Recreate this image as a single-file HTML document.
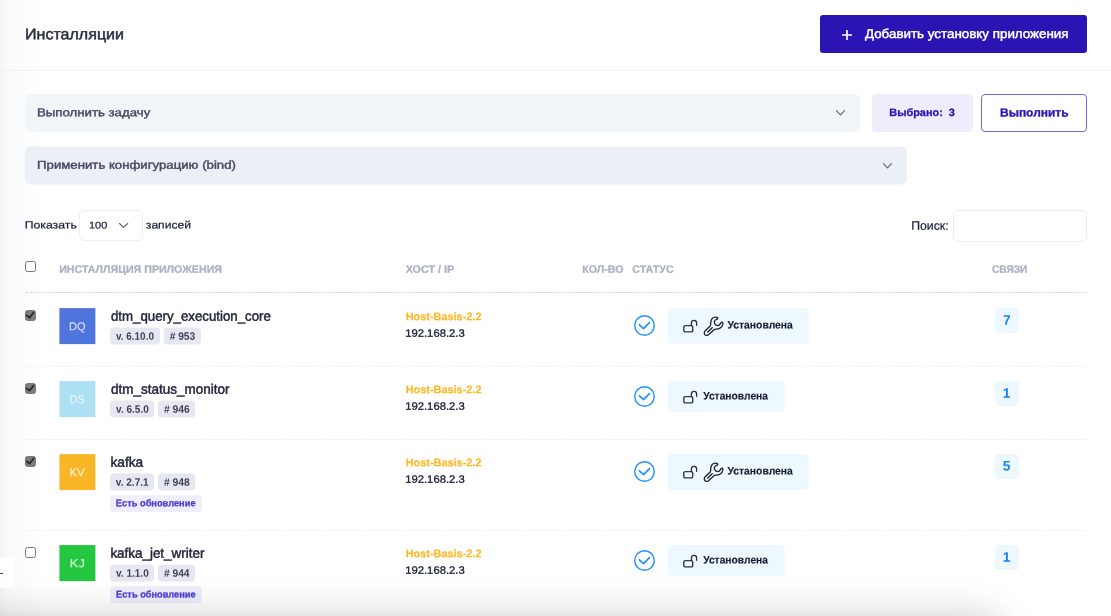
<!DOCTYPE html>
<html lang="ru">
<head>
<meta charset="utf-8">
<title>Инсталляции</title>
<style>
*{box-sizing:border-box;margin:0;padding:0}
html,body{width:1111px;height:616px;overflow:hidden;background:#fff}
body{font-family:"Liberation Sans",sans-serif;color:#3f4254;position:relative;font-size:13px}
#page{position:absolute;left:0;top:0;width:1111px;height:616px;overflow:hidden;will-change:transform}
.abs{position:absolute;white-space:nowrap}
.t{position:absolute;white-space:nowrap;line-height:1;transform-origin:0 50%;transform:translate(var(--dx,0px),calc(-50% + var(--dy,0px))) scaleX(var(--sx,1)) rotate(.03deg)}
.c{transform-origin:50% 50%;transform:translate(calc(-50% + var(--dx,0px)),calc(-50% + var(--dy,0px))) scaleX(var(--sx,1)) rotate(.03deg)}
.b{font-weight:bold}
/* edge shadows */
#lshadow{left:0;top:0;width:40px;height:616px;background:linear-gradient(90deg,#f0f2f4 0,#f4f5f7 1.5px,#f7f8fa 4px,#f9fafb 10px,#fbfcfd 25px,#fff 40px)}
#bshadow{left:-100px;top:618px;width:1097px;height:100px;box-shadow:0 0 40px rgba(0,0,0,.22)}
#tab{left:0;top:558.3px;width:14px;height:30px;background:#fff;border-radius:0 3px 3px 0}
#tabdash{left:0;top:572.5px;width:3px;height:1.4px;background:#3f4280}
/* header */
#hdrline{left:0;top:70px;width:1111px;height:1px;background:#f1f1f4}
#addbtn{left:820px;top:15px;width:266.5px;height:38px;background:#2a14b4;border-radius:3px}
/* selects */
.sel{background:#f3f6f9;border-radius:6px}
#sel1{left:25px;top:94px;width:835px;height:37.7px}
#sel2{left:25px;top:146px;width:882px;height:37.6px;background:#ebeff6;transform:translateY(.4px)}
#chosen{left:872px;top:94px;width:101px;height:37.7px;background:#eeedfb;border-radius:4px}
#runbtn{left:981px;top:94px;width:105.7px;height:37.7px;border:1px solid #7468d6;border-radius:4px;background:#fff}
#lensel{left:79px;top:210px;width:64px;height:31px;border:1px solid #eceef3;border-radius:5px;background:#fff}
#search{left:953px;top:210px;width:134px;height:32px;border:1px solid #ebecf4;border-radius:5px;background:#fff}
.th{font-weight:bold;color:#adaec3}
#thline{left:26px;top:292px;width:1061px;height:1px;background:repeating-linear-gradient(90deg,#b9b9cb 0 1px,transparent 1px 2px,#dcdce7 2px 4px,transparent 4px 5px)}
.rowline{left:26px;width:1061px;height:1px;background:repeating-linear-gradient(90deg,#e8eaf0 0 1px,transparent 1px 2px,#f1f2f6 2px 4px,transparent 4px 5px)}
.cb{width:11px;height:10.7px;border-radius:2.5px;border:1px solid #767678;background:#fff}
.cb.on{background:#7c7c7c;border-color:#787878}
.av{width:36.2px;height:35.8px;transform:translate(.4px,.1px)}
.bdg{height:17.4px;transform:translateY(-.4px);border-radius:4px;background:#e6e7f0}
.upd{height:17px;transform:translateY(.2px);border-radius:4px;background:#efeefc}
.st{border-radius:4px;background:#eef8ff}
.lnk{width:24px;height:24.6px;border-radius:4.5px;background:#edf7ff;transform:translate(-.1px,-.1px)}
svg{position:absolute;overflow:visible}
</style>
</head>
<body>
<div id="page">
<div class="abs" id="lshadow"></div>
<div class="abs" id="hdrline"></div>
<div class="t" id="title" style="left:25px;top:33px;font-size:15.4px;--dx:0.05px;--dy:0.95px;color:#2b2c40;-webkit-text-stroke:.5px currentColor;--sx:1.0414">Инсталляции</div>
<div class="abs" id="addbtn"></div>
<svg style="left:842.1px;top:30.1px" width="10" height="10" viewBox="0 0 10 10"><path d="M5 0v10M0 5h10" stroke="#fff" stroke-width="1.65" fill="none"/></svg>
<div class="t" id="addtxt" style="left:864px;top:34px;font-size:12.8px;--dx:0.99px;--dy:0.40px;color:#fff;-webkit-text-stroke:.45px currentColor;--sx:1.0445">Добавить установку приложения</div>

<div class="abs sel" id="sel1"></div>
<div class="t" id="s1txt" style="left:36px;top:112px;font-size:11.3px;--dx:0.90px;--dy:0.92px;color:#454960;-webkit-text-stroke:.4px currentColor;--sx:1.1713">Выполнить задачу</div>
<svg style="left:836.3px;top:109.9px" width="9" height="5.6" viewBox="0 0 9 5.6"><path d="M0.5 0.7L4.500 4.900l4-4.200" stroke="#5e6278" stroke-width="1.15" fill="none" stroke-linecap="round" stroke-linejoin="round"/></svg>
<div class="abs" id="chosen"></div>
<div class="t b" id="chtxt" style="left:889px;top:112px;font-size:10.7px;--dx:0.29px;--dy:0.38px;color:#2a14b4;-webkit-text-stroke:.3px currentColor;--sx:1.0195">Выбрано:&nbsp; 3</div>
<div class="abs" id="runbtn"></div>
<div class="t b" id="runtxt" style="left:999px;top:113px;font-size:11.8px;--dx:1.00px;--dy:0.49px;color:#2a14b4;-webkit-text-stroke:.3px currentColor;--sx:1.0157">Выполнить</div>

<div class="abs sel" id="sel2"></div>
<div class="t" id="s2txt" style="left:37px;top:165px;font-size:11.3px;--dx:0.10px;--dy:0.38px;color:#454960;-webkit-text-stroke:.4px currentColor;--sx:1.1681">Применить конфигурацию (bind)</div>
<svg style="left:882.6px;top:162.6px" width="9" height="5.6" viewBox="0 0 9 5.6"><path d="M0.5 0.7L4.500 4.900l4-4.200" stroke="#5e6278" stroke-width="1.15" fill="none" stroke-linecap="round" stroke-linejoin="round"/></svg>

<div class="t" id="show" style="left:24px;top:224px;font-size:10.6px;--dx:0.66px;--dy:0.80px;color:#181c32;-webkit-text-stroke:.2px currentColor;--sx:1.1580">Показать</div>
<div class="abs" id="lensel"></div>
<div class="t" id="n100" style="left:89px;top:225px;font-size:9.7px;--dx:0.06px;--dy:0.26px;color:#181c32;-webkit-text-stroke:.2px currentColor;--sx:1.1224">100</div>
<svg style="left:119.1px;top:223.200px" width="9.2" height="5" viewBox="0 0 9.2 5"><path d="M0.5 0.5L4.600 4.400l4.100-3.900" stroke="#5e6278" stroke-width="1.1" fill="none" stroke-linecap="round" stroke-linejoin="round"/></svg>
<div class="t" id="recs" style="left:145px;top:224px;font-size:10.6px;--dx:0.83px;--dy:0.80px;color:#181c32;-webkit-text-stroke:.2px currentColor;--sx:1.1433">записей</div>
<div class="t" id="srch" style="left:911px;top:225px;font-size:12.2px;--dx:0.20px;--dy:0.94px;color:#181c32;-webkit-text-stroke:.2px currentColor;--sx:1.0079">Поиск:</div>
<div class="abs" id="search"></div>

<div class="abs cb" style="left:25px;top:261.3px"></div>
<div class="t th" id="th1" style="left:59px;top:268px;font-size:10.5px;--dx:0.22px;--dy:0.95px;-webkit-text-stroke:.25px currentColor;--sx:1.0135">ИНСТАЛЛЯЦИЯ ПРИЛОЖЕНИЯ</div>
<div class="t th" id="th2" style="left:405px;top:268px;font-size:10.5px;--dx:0.64px;--dy:0.95px;-webkit-text-stroke:.25px currentColor;--sx:1.0264">ХОСТ / IP</div>
<div class="t th" id="th3" style="left:582px;top:268px;font-size:10.5px;--dx:0.22px;--dy:0.95px;-webkit-text-stroke:.25px currentColor;--sx:1.0146">КОЛ-ВО</div>
<div class="t th" id="th4" style="left:632px;top:268px;font-size:10.5px;--dx:0.31px;--dy:0.95px;-webkit-text-stroke:.25px currentColor;--sx:1.0153">СТАТУС</div>
<div class="t th" id="th5" style="left:992px;top:268px;font-size:10.5px;--dx:0.00px;--dy:0.95px;-webkit-text-stroke:.25px currentColor;--sx:0.9652">СВЯЗИ</div>
<div class="abs" id="thline"></div>
<div class="abs cb on" style="left:25px;top:310.2px"></div>
<svg style="left:25px;top:310px" width="11" height="11" viewBox="0 0 11 11"><path d="M1.800 5.300L4.500 7.700L8.600 2.400" stroke="#262626" stroke-width="1.6" fill="none" stroke-linecap="round" stroke-linejoin="round"/></svg>
<div class="abs av" style="left:59px;top:308px;background:#4f75dc"></div>
<div class="t c" id="av0" style="left:77px;top:326px;font-size:11.6px;--dx:0.31px;--dy:0.11px;color:#d3ddf8;-webkit-text-stroke:0.2px currentColor;--sx:0.9481">DQ</div>
<div class="t" id="name0" style="left:111px;top:316px;font-size:13.8px;--dx:0.00px;--dy:0.61px;color:#23243a;-webkit-text-stroke:0.45px currentColor;--sx:0.9601">dtm_query_execution_core</div>
<div class="abs bdg" style="left:110px;top:328px;width:49.7px"></div>
<div class="t b" id="v0" style="left:116px;top:336px;font-size:10.8px;--dx:0.10px;--dy:0.06px;color:#3f4254;--sx:0.9166">v. 6.10.0</div>
<div class="abs bdg" style="left:163.7px;top:328px;width:37.2px"></div>
<div class="t b" id="n0" style="left:169px;top:336px;font-size:10.8px;--dx:0.63px;--dy:0.06px;color:#3f4254;--sx:0.9486"># 953</div>
<div class="t b" id="h0" style="left:405px;top:316px;font-size:11px;--dx:0.75px;--dy:0.75px;color:#ffb822;-webkit-text-stroke:0.2px currentColor;--sx:0.9907">Host-Basis-2.2</div>
<div class="t" id="ip0" style="left:405px;top:333px;font-size:10.7px;--dx:0.20px;--dy:0.05px;color:#181c32;-webkit-text-stroke:0.3px currentColor;--sx:1.0537">192.168.2.3</div>
<svg style="left:633.7px;top:315.4px" width="21" height="21" viewBox="0 0 21 21"><circle cx="10.5" cy="10.5" r="9.750" fill="none" stroke="#2492ff" stroke-width="1.45"/><path d="M5.400 9.800L9.600 13.600L15.400 7.700" fill="none" stroke="#2492ff" stroke-width="1.8" stroke-linecap="round" stroke-linejoin="round"/></svg>
<div class="abs st" style="left:668px;top:308px;width:140.8px;height:36.1px;transform:translate(-.3px,.1px)"></div>
<svg style="left:683px;top:318px" width="15" height="15" viewBox="0 0 15 15"><rect x="0.8" y="7.6" width="8.900" height="6.300" rx="1.5" fill="none" stroke="#34354a" stroke-width="1.4"/><path d="M8.400 7.600V4.900a2.600 2.600 0 0 1 5.200 0V7.300" fill="none" stroke="#2b2c3f" stroke-width="1.3" stroke-linecap="round"/></svg>
<svg style="left:702px;top:314px" width="24" height="24" viewBox="0 0 24 24"><path d="M13.64 3.04C14.29 3.07 15.27 3.38 15.58 3.7C15.9 4.03 15.73 4.69 15.51 4.99C15.28 5.28 14.63 5.21 14.22 5.45C13.81 5.69 13.36 5.97 13.05 6.43C12.74 6.88 12.38 7.63 12.35 8.18C12.32 8.73 12.58 9.25 12.86 9.74C13.14 10.23 13.57 10.78 14.03 11.1C14.48 11.43 15.06 11.69 15.58 11.69C16.1 11.69 16.69 11.43 17.14 11.1C17.6 10.78 17.95 10.19 18.31 9.74C18.67 9.29 18.96 8.66 19.29 8.38C19.61 8.1 19.99 7.98 20.26 8.06C20.53 8.15 20.86 8.47 20.92 8.88C20.99 9.29 20.82 9.92 20.65 10.52C20.47 11.12 20.26 11.88 19.87 12.47C19.48 13.05 18.9 13.64 18.31 14.03C17.73 14.42 17.01 14.64 16.36 14.81C15.71 14.97 15.06 14.93 14.42 15.04C13.77 15.15 12.92 15.3 12.47 15.47C12.01 15.64 12.26 15.55 11.69 16.05C11.12 16.55 9.92 17.67 9.04 18.47C8.16 19.27 7.03 20.35 6.43 20.84C5.83 21.34 5.91 21.36 5.45 21.43C5 21.49 4.19 21.49 3.7 21.23C3.21 20.97 2.76 20.36 2.53 19.87C2.31 19.38 2.27 18.77 2.34 18.31C2.4 17.86 2.37 17.79 2.92 17.14C3.47 16.49 4.75 15.31 5.65 14.42C6.55 13.52 7.8 12.48 8.3 11.77C8.8 11.05 8.57 10.69 8.65 10.13C8.73 9.56 8.68 8.99 8.77 8.38C8.85 7.76 8.93 7.05 9.16 6.43C9.38 5.81 9.71 5.16 10.13 4.68C10.55 4.19 11.1 3.78 11.69 3.51C12.27 3.23 12.99 3.01 13.64 3.04Z" fill="none" stroke="#1f2030" stroke-width="1.3" stroke-linejoin="round"/><path d="M5.77 18L10.21 13.71" fill="none" stroke="#1f2030" stroke-width="1.4" stroke-linecap="round"/></svg>
<div class="t b" id="st0" style="left:727px;top:325px;font-size:10.9px;--dx:0.48px;--dy:0.00px;color:#181c32;-webkit-text-stroke:0.15px currentColor;--sx:0.9503">Установлена</div>
<div class="abs lnk" style="left:995px;top:308px"></div>
<div class="t c b" id="l0" style="left:1006px;top:320px;font-size:13.8px;--dx:0.90px;--dy:0.66px;color:#1b84f5">7</div>
<div class="abs rowline" style="top:366px"></div>
<div class="abs cb on" style="left:25px;top:383.2px"></div>
<svg style="left:25px;top:383px" width="11" height="11" viewBox="0 0 11 11"><path d="M1.800 5.300L4.500 7.700L8.600 2.400" stroke="#262626" stroke-width="1.6" fill="none" stroke-linecap="round" stroke-linejoin="round"/></svg>
<div class="abs av" style="left:59px;top:381px;background:#ace0f2"></div>
<div class="t c" id="av1" style="left:77px;top:399px;font-size:11.6px;--dx:0.30px;--dy:0.12px;color:#e4f5fb;-webkit-text-stroke:0.2px currentColor;--sx:0.9322">DS</div>
<div class="t" id="name1" style="left:111px;top:389px;font-size:13.8px;--dx:0.00px;--dy:0.60px;color:#23243a;-webkit-text-stroke:0.45px currentColor;--sx:0.9775">dtm_status_monitor</div>
<div class="abs bdg" style="left:110px;top:401px;width:44.1px"></div>
<div class="t b" id="v1" style="left:116px;top:409px;font-size:10.8px;--dx:0.10px;--dy:0.13px;color:#3f4254;--sx:0.9281">v. 6.5.0</div>
<div class="abs bdg" style="left:158.1px;top:401px;width:37.2px"></div>
<div class="t b" id="n1" style="left:163px;top:409px;font-size:10.8px;--dx:0.91px;--dy:0.13px;color:#3f4254;--sx:0.9593"># 946</div>
<div class="t b" id="h1" style="left:405px;top:389px;font-size:11px;--dx:0.75px;--dy:0.75px;color:#ffb822;-webkit-text-stroke:0.2px currentColor;--sx:0.9907">Host-Basis-2.2</div>
<div class="t" id="ip1" style="left:405px;top:406px;font-size:10.7px;--dx:0.20px;--dy:0.05px;color:#181c32;-webkit-text-stroke:0.3px currentColor;--sx:1.0537">192.168.2.3</div>
<svg style="left:633.8px;top:385.7px" width="21" height="21" viewBox="0 0 21 21"><circle cx="10.5" cy="10.5" r="9.750" fill="none" stroke="#2492ff" stroke-width="1.45"/><path d="M5.400 9.800L9.600 13.600L15.400 7.700" fill="none" stroke="#2492ff" stroke-width="1.8" stroke-linecap="round" stroke-linejoin="round"/></svg>
<div class="abs st" style="left:668px;top:381px;width:116.9px;height:30.9px;transform:translate(-.3px,0)"></div>
<svg style="left:683px;top:388.6px" width="15" height="15" viewBox="0 0 15 15"><rect x="0.8" y="7.6" width="8.900" height="6.300" rx="1.5" fill="none" stroke="#34354a" stroke-width="1.4"/><path d="M8.400 7.600V4.900a2.600 2.600 0 0 1 5.200 0V7.300" fill="none" stroke="#2b2c3f" stroke-width="1.3" stroke-linecap="round"/></svg>
<div class="t b" id="st1" style="left:703px;top:395px;font-size:10.9px;--dx:0.18px;--dy:0.95px;color:#181c32;-webkit-text-stroke:0.15px currentColor;--sx:0.9425">Установлена</div>
<div class="abs lnk" style="left:995px;top:381px"></div>
<div class="t c b" id="l1" style="left:1006px;top:393px;font-size:13.8px;--dx:0.70px;--dy:0.66px;color:#1b84f5">1</div>
<div class="abs rowline" style="top:439px"></div>
<div class="abs cb on" style="left:25px;top:456.2px"></div>
<svg style="left:25px;top:456px" width="11" height="11" viewBox="0 0 11 11"><path d="M1.800 5.300L4.500 7.700L8.600 2.400" stroke="#262626" stroke-width="1.6" fill="none" stroke-linecap="round" stroke-linejoin="round"/></svg>
<div class="abs av" style="left:59px;top:454px;background:#f9b728"></div>
<div class="t c" id="av2" style="left:77px;top:472px;font-size:11.6px;--dx:0.07px;--dy:0.14px;color:#fdeecb;-webkit-text-stroke:0.2px currentColor;--sx:1.0007">KV</div>
<div class="t" id="name2" style="left:110px;top:462px;font-size:13.8px;--dx:0.40px;--dy:0.60px;color:#23243a;-webkit-text-stroke:0.45px currentColor;--sx:0.9939">kafka</div>
<div class="abs bdg" style="left:110px;top:474px;width:44.1px"></div>
<div class="t b" id="v2" style="left:115px;top:482px;font-size:10.8px;--dx:0.77px;--dy:0.14px;color:#3f4254;--sx:0.9342">v. 2.7.1</div>
<div class="abs bdg" style="left:158.1px;top:474px;width:37.2px"></div>
<div class="t b" id="n2" style="left:163px;top:482px;font-size:10.8px;--dx:0.91px;--dy:0.14px;color:#3f4254;--sx:0.9570"># 948</div>
<div class="abs upd" style="left:110px;top:495px;width:91.5px"></div>
<div class="t b" id="u2" style="left:115px;top:503px;font-size:9.7px;--dx:0.86px;--dy:0.11px;color:#4b3fd6;-webkit-text-stroke:0.3px currentColor;--sx:0.9559">Есть обновление</div>
<div class="t b" id="h2" style="left:405px;top:462px;font-size:11px;--dx:0.75px;--dy:0.75px;color:#ffb822;-webkit-text-stroke:0.2px currentColor;--sx:0.9907">Host-Basis-2.2</div>
<div class="t" id="ip2" style="left:405px;top:479px;font-size:10.7px;--dx:0.20px;--dy:0.05px;color:#181c32;-webkit-text-stroke:0.3px currentColor;--sx:1.0537">192.168.2.3</div>
<svg style="left:633.7px;top:461.4px" width="21" height="21" viewBox="0 0 21 21"><circle cx="10.5" cy="10.5" r="9.750" fill="none" stroke="#2492ff" stroke-width="1.45"/><path d="M5.400 9.800L9.600 13.600L15.400 7.700" fill="none" stroke="#2492ff" stroke-width="1.8" stroke-linecap="round" stroke-linejoin="round"/></svg>
<div class="abs st" style="left:668px;top:454px;width:140.8px;height:36.1px;transform:translate(-.3px,.1px)"></div>
<svg style="left:683px;top:464px" width="15" height="15" viewBox="0 0 15 15"><rect x="0.8" y="7.6" width="8.900" height="6.300" rx="1.5" fill="none" stroke="#34354a" stroke-width="1.4"/><path d="M8.400 7.600V4.900a2.600 2.600 0 0 1 5.200 0V7.300" fill="none" stroke="#2b2c3f" stroke-width="1.3" stroke-linecap="round"/></svg>
<svg style="left:702px;top:460px" width="24" height="24" viewBox="0 0 24 24"><path d="M13.64 3.04C14.29 3.07 15.27 3.38 15.58 3.7C15.9 4.03 15.73 4.69 15.51 4.99C15.28 5.28 14.63 5.21 14.22 5.45C13.81 5.69 13.36 5.97 13.05 6.43C12.74 6.88 12.38 7.63 12.35 8.18C12.32 8.73 12.58 9.25 12.86 9.74C13.14 10.23 13.57 10.78 14.03 11.1C14.48 11.43 15.06 11.69 15.58 11.69C16.1 11.69 16.69 11.43 17.14 11.1C17.6 10.78 17.95 10.19 18.31 9.74C18.67 9.29 18.96 8.66 19.29 8.38C19.61 8.1 19.99 7.98 20.26 8.06C20.53 8.15 20.86 8.47 20.92 8.88C20.99 9.29 20.82 9.92 20.65 10.52C20.47 11.12 20.26 11.88 19.87 12.47C19.48 13.05 18.9 13.64 18.31 14.03C17.73 14.42 17.01 14.64 16.36 14.81C15.71 14.97 15.06 14.93 14.42 15.04C13.77 15.15 12.92 15.3 12.47 15.47C12.01 15.64 12.26 15.55 11.69 16.05C11.12 16.55 9.92 17.67 9.04 18.47C8.16 19.27 7.03 20.35 6.43 20.84C5.83 21.34 5.91 21.36 5.45 21.43C5 21.49 4.19 21.49 3.7 21.23C3.21 20.97 2.76 20.36 2.53 19.87C2.31 19.38 2.27 18.77 2.34 18.31C2.4 17.86 2.37 17.79 2.92 17.14C3.47 16.49 4.75 15.31 5.65 14.42C6.55 13.52 7.8 12.48 8.3 11.77C8.8 11.05 8.57 10.69 8.65 10.13C8.73 9.56 8.68 8.99 8.77 8.38C8.85 7.76 8.93 7.05 9.16 6.43C9.38 5.81 9.71 5.16 10.13 4.68C10.55 4.19 11.1 3.78 11.69 3.51C12.27 3.23 12.99 3.01 13.64 3.04Z" fill="none" stroke="#1f2030" stroke-width="1.3" stroke-linejoin="round"/><path d="M5.77 18L10.21 13.71" fill="none" stroke="#1f2030" stroke-width="1.4" stroke-linecap="round"/></svg>
<div class="t b" id="st2" style="left:727px;top:471px;font-size:10.9px;--dx:0.48px;--dy:0.00px;color:#181c32;-webkit-text-stroke:0.15px currentColor;--sx:0.9503">Установлена</div>
<div class="abs lnk" style="left:995px;top:454px"></div>
<div class="t c b" id="l2" style="left:1006px;top:466px;font-size:13.8px;--dx:0.70px;--dy:0.35px;color:#1b84f5">5</div>
<div class="abs rowline" style="top:530px"></div>
<div class="abs cb" style="left:25px;top:547.2px"></div>
<div class="abs av" style="left:59px;top:545px;background:#24c840"></div>
<div class="t c" id="av3" style="left:77px;top:563px;font-size:11.6px;--dx:0.37px;--dy:0.11px;color:#d5f5da;-webkit-text-stroke:0.2px currentColor;--sx:1.1117">KJ</div>
<div class="t" id="name3" style="left:110px;top:553px;font-size:13.8px;--dx:0.41px;--dy:0.58px;color:#23243a;-webkit-text-stroke:0.45px currentColor;--sx:0.9723">kafka_jet_writer</div>
<div class="abs bdg" style="left:110px;top:565px;width:44.1px"></div>
<div class="t b" id="v3" style="left:115px;top:573px;font-size:10.8px;--dx:1.00px;--dy:0.13px;color:#3f4254;--sx:0.9287">v. 1.1.0</div>
<div class="abs bdg" style="left:158.1px;top:565px;width:37.2px"></div>
<div class="t b" id="n3" style="left:163px;top:573px;font-size:10.8px;--dx:0.91px;--dy:0.13px;color:#3f4254;--sx:0.9500"># 944</div>
<div class="abs upd" style="left:110px;top:586px;width:91.5px"></div>
<div class="t b" id="u3" style="left:116px;top:594px;font-size:9.7px;--dx:0.07px;--dy:0.40px;color:#4b3fd6;-webkit-text-stroke:0.3px currentColor;--sx:0.9541">Есть обновление</div>
<div class="t b" id="h3" style="left:405px;top:553px;font-size:11px;--dx:0.75px;--dy:0.75px;color:#ffb822;-webkit-text-stroke:0.2px currentColor;--sx:0.9907">Host-Basis-2.2</div>
<div class="t" id="ip3" style="left:405px;top:570px;font-size:10.7px;--dx:0.21px;--dy:0.05px;color:#181c32;-webkit-text-stroke:0.3px currentColor;--sx:1.0534">192.168.2.3</div>
<svg style="left:633.8px;top:549.7px" width="21" height="21" viewBox="0 0 21 21"><circle cx="10.5" cy="10.5" r="9.750" fill="none" stroke="#2492ff" stroke-width="1.45"/><path d="M5.400 9.800L9.600 13.600L15.400 7.700" fill="none" stroke="#2492ff" stroke-width="1.8" stroke-linecap="round" stroke-linejoin="round"/></svg>
<div class="abs st" style="left:668px;top:545px;width:116.9px;height:30.9px;transform:translate(-.3px,0)"></div>
<svg style="left:683px;top:552.6px" width="15" height="15" viewBox="0 0 15 15"><rect x="0.8" y="7.6" width="8.900" height="6.300" rx="1.5" fill="none" stroke="#34354a" stroke-width="1.4"/><path d="M8.400 7.600V4.900a2.600 2.600 0 0 1 5.200 0V7.300" fill="none" stroke="#2b2c3f" stroke-width="1.3" stroke-linecap="round"/></svg>
<div class="t b" id="st3" style="left:703px;top:559px;font-size:10.9px;--dx:0.18px;--dy:0.95px;color:#181c32;-webkit-text-stroke:0.15px currentColor;--sx:0.9425">Установлена</div>
<div class="abs lnk" style="left:995px;top:545px"></div>
<div class="t c b" id="l3" style="left:1006px;top:557px;font-size:13.8px;--dx:0.70px;--dy:0.66px;color:#1b84f5">1</div>
<div class="abs" id="tab"></div>
<div class="abs" id="tabdash"></div>
<div class="abs" id="bshadow"></div>
</div>
</body>
</html>
